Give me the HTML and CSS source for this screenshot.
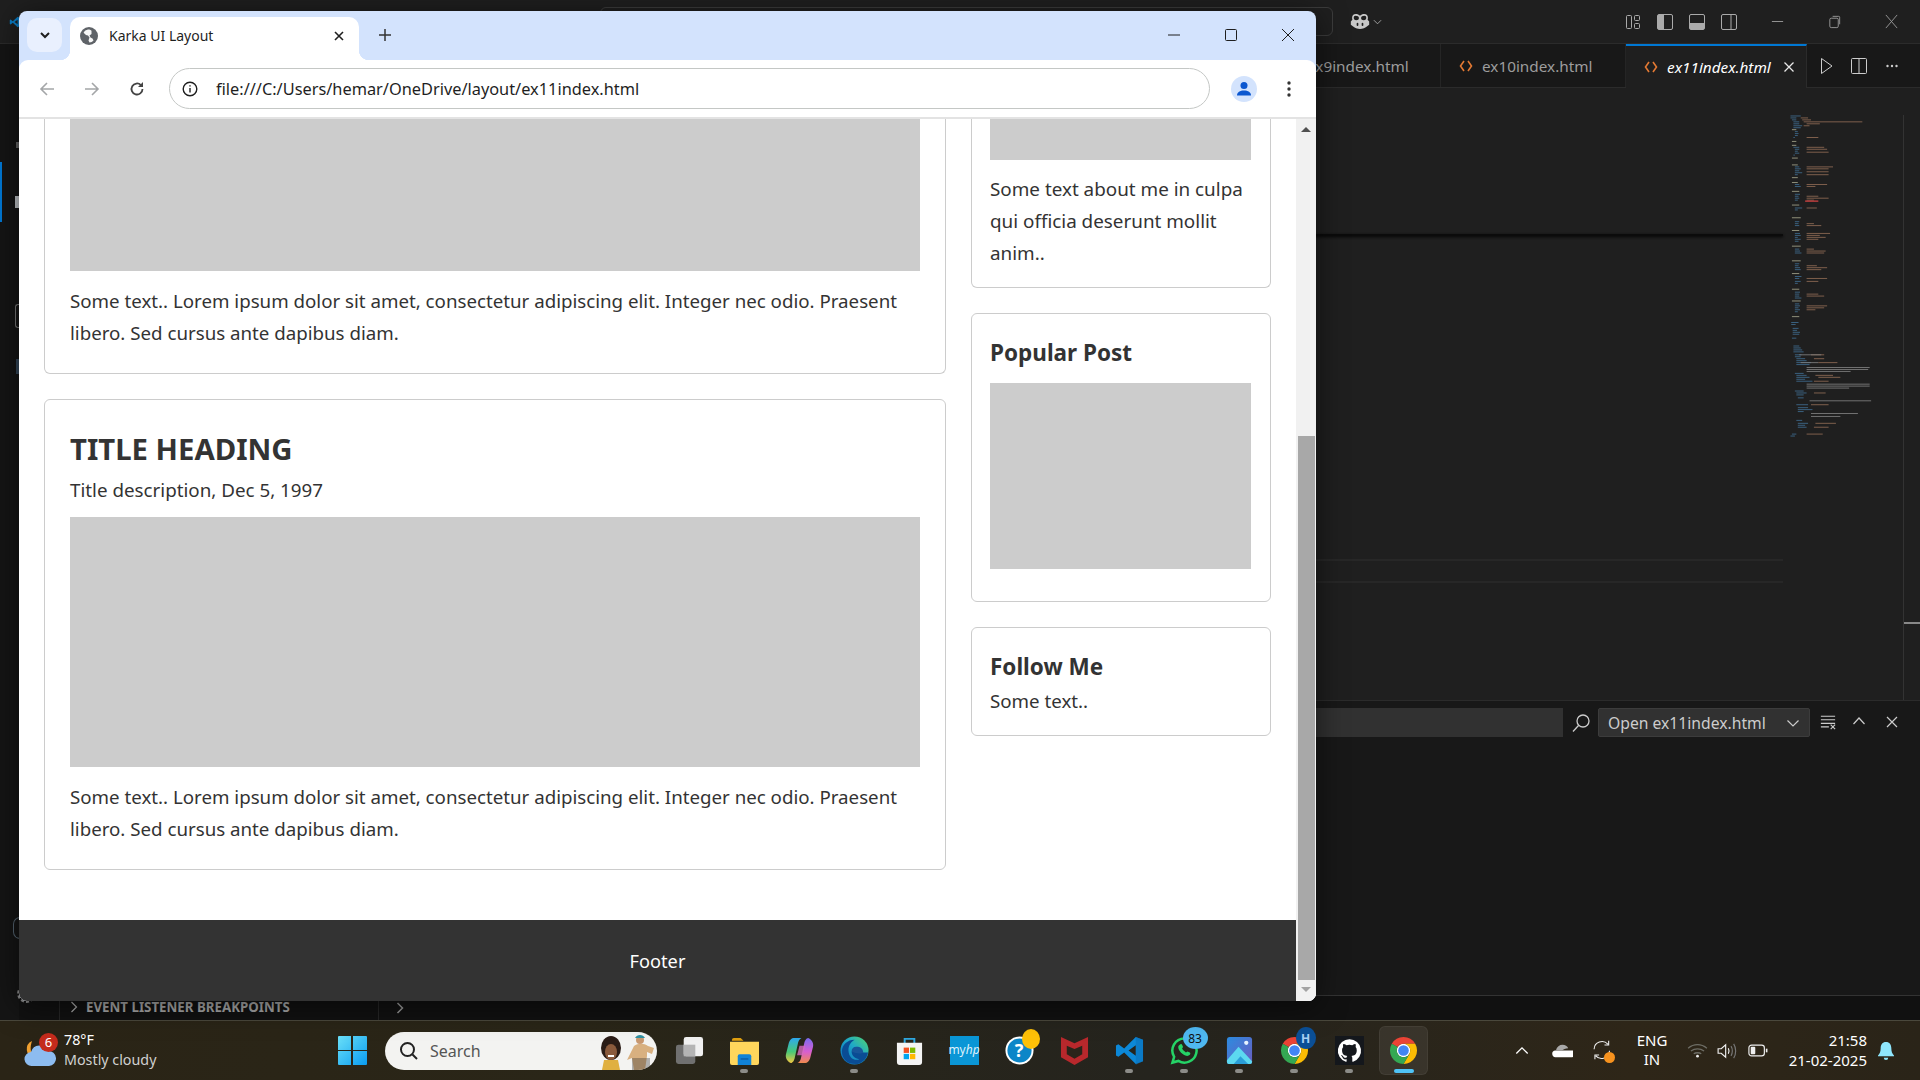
FILE: index.html
```html
<!DOCTYPE html>
<html lang="en">
<head>
    <meta charset="UTF-8">
    <meta name="viewport" content="width=device-width, initial-scale=1.0">
    <title>Karka UI Layout</title>
    <link rel="stylesheet" href="styles.css">
</head>

<body>

<div class="desktop">

    <!-- VS CODE BEHIND THE BROWSER -->
    <div class="code-app">
        <div class="code-titlebar">
            <svg class="code-logo" viewBox="0 0 30 30"><path fill="#0a7cc4" d="M21.5 2 9.5 13 4 8.8 2 9.8v10.4l2 1L9.5 17l12 11 6.5-3V5zm0 7.500L14 15l7.500 5.500z" fill-rule="evenodd"/></svg>
            <div class="command-center"></div>
            <svg class="copilot" viewBox="0 0 24 20"><path fill="#c8c8c8" fill-rule="evenodd" d="M7 1c2 0 3.500.6 5 2 1.500-1.400 3-2 5-2 3 0 4.500 1.800 4.500 4.500 0 1-.1 1.800-.4 2.500l1.900 2v4l-2 1.500C18.500 18 15 19 12 19s-6.500-1-9-3.500L1 14v-4l1.900-2c-.3-.7-.4-1.500-.4-2.500C2.500 2.800 4 1 7 1zm-.3 2.200c-1.600 0-2.200.9-2.200 2.300 0 2 .8 3 3 3 1.900 0 3.200-.8 3.200-2.600 0-1.700-1.700-2.700-4-2.700zm10.600 0c-2.300 0-4 1-4 2.700 0 1.800 1.300 2.600 3.200 2.600 2.200 0 3-1 3-3 0-1.400-.6-2.300-2.200-2.300zM9 11.500c-.6 0-1 .4-1 1v2c0 .6.400 1 1 1s1-.4 1-1v-2c0-.6-.4-1-1-1zm6 0c-.6 0-1 .4-1 1v2c0 .6.400 1 1 1s1-.4 1-1v-2c0-.6-.4-1-1-1z"/></svg>
            <svg class="copilot-caret" viewBox="0 0 10 6"><path d="M1 1l4 4 4-4" fill="none" stroke="#aaa"/></svg>

            <div class="layout-icons">
                <svg viewBox="0 0 18 18" fill="none" stroke="#aaa"><rect x="2.500" y="2.500" width="5" height="13" rx="1"/><rect x="10.500" y="2.500" width="5" height="5" rx="1"/><rect x="10.500" y="10.500" width="5" height="5" rx="1"/></svg>
                <svg viewBox="0 0 18 18" fill="none" stroke="#aaa"><rect x="1.500" y="1.500" width="15" height="15" rx="1.500"/><rect x="2" y="2" width="6" height="14" fill="#aaa" stroke="none"/></svg>
                <svg viewBox="0 0 18 18" fill="none" stroke="#aaa"><rect x="1.500" y="1.500" width="15" height="15" rx="1.500"/><rect x="2" y="10" width="14" height="6" fill="#aaa" stroke="none"/></svg>
                <svg viewBox="0 0 18 18" fill="none" stroke="#aaa"><rect x="1.500" y="1.500" width="15" height="15" rx="1.500"/><path d="M11 2v14"/></svg>
            </div>
            <div class="code-controls">
                <svg viewBox="0 0 16 16" fill="none" stroke="#999"><path d="M2 8h12"/></svg>
                <svg viewBox="0 0 16 16" fill="none" stroke="#999"><rect x="3" y="4.500" width="9" height="10" rx="1.500"/><path d="M6 2.500h6.500a1 1 0 0 1 1 1V11"/></svg>
                <svg viewBox="0 0 16 16" fill="none" stroke="#999"><path d="M2 1l12 14M14 1 2 15"/></svg>
            </div>
        </div>

        <div class="code-main">
            <div class="activity">
                <span class="activity-tick"></span>
                <span class="activity-marker"></span>
                <span class="activity-cog"></span>
                <span class="activity-box"></span>
                <span class="activity-tag"></span>
                <span class="activity-account"></span>
                <svg class="activity-gear" viewBox="0 0 24 24" fill="none" stroke="#8a8a8a" stroke-width="2"><circle cx="12" cy="12" r="8" stroke-dasharray="3 2"/><circle cx="12" cy="12" r="4"/></svg>
            </div>

            <div class="code-right">
                <div class="code-tabs">
                    <div class="code-tab">
                        <svg class="tab-code-icon" viewBox="0 0 14 14" fill="none" stroke="#e37933" stroke-width="1.600"><path d="M5 2 1.500 7 5 12M9 2l3.500 5L9 12"/></svg>ex9index.html
                    </div>
                    <div class="code-tab ten">
                        <svg class="tab-code-icon" viewBox="0 0 14 14" fill="none" stroke="#e37933" stroke-width="1.600"><path d="M5 2 1.500 7 5 12M9 2l3.500 5L9 12"/></svg>ex10index.html
                    </div>
                    <div class="code-tab active">
                        <svg class="tab-code-icon" viewBox="0 0 14 14" fill="none" stroke="#e37933" stroke-width="1.600"><path d="M5 2 1.500 7 5 12M9 2l3.500 5L9 12"/></svg><em>ex11index.html</em>
                        <svg class="tab-x" viewBox="0 0 12 12" fill="none" stroke="#e8e8e8" stroke-width="1.300"><path d="M1.500 1.500l9 9M10.500 1.500l-9 9"/></svg>
                    </div>
                    <div class="tab-actions">
                        <svg viewBox="0 0 18 18" fill="none" stroke="#ccc"><path d="M4.500 1.500v15L15 9z"/></svg>
                        <svg viewBox="0 0 18 18" fill="none" stroke="#ccc"><rect x="1.500" y="1.500" width="15" height="15" rx="1"/><path d="M9 1.500v15"/></svg>
                        <svg viewBox="0 0 18 18" fill="#ccc"><circle cx="4.500" cy="9" r="1.200"/><circle cx="9" cy="9" r="1.200"/><circle cx="13.500" cy="9" r="1.200"/></svg>
                    </div>
                </div>

                <div class="editor">
                    <div class="editor-lines">
                        <div class="sticky-shadow"></div>
                        <div class="fold-line first"></div>
                        <div class="fold-line"></div>
                    </div>
                    <div class="minimap">
                        <svg viewBox="0 0 120 330" width="88" height="323" preserveAspectRatio="none" fill="none" stroke-width="1">
                            <path stroke="#3f6c8f" d="M2 1h14M2 3h8M4 5h6M6 7h8M6 9h8M6 11h12M6 13h10M8 17h4M8 19h5M8 21h4M6 23h2M6 33h8M8 35h6M8 37h4M8 39h6M6 41h2M8 53h6M8 55h8M8 57h6M8 59h10M8 61h4M8 71h6M8 73h8M8 81h7M8 83h5M8 85h6M8 87h4M8 95h10M8 97h4M8 109h6M8 111h5M8 113h6M8 121h7M8 123h8M8 125h4M8 127h8M8 129h5M8 137h6M8 139h7M8 141h9M8 152h6M8 154h5M8 156h7M8 158h8M8 165h9M8 167h6M8 170h8M8 172h4M8 181h7M8 183h6M8 185h6M8 187h9M8 193h6M8 195h7M8 197h5M8 199h7M8 201h4M3 212h10M3 214h6M5 218h8M5 220h6M5 222h10M5 224h9M4 228h6M6 236h8M6 238h10M6 240h12M6 242h14M8 245h9M8 247h8M10 249h12M10 251h14M10 253h20M10 255h18M8 264h12M10 266h14M10 268h18M10 270h12M10 272h22M8 282h12M10 284h14M10 286h10M12 289h8M10 296h16M12 299h14M12 301h20M12 303h8M10 312h8M12 315h14M12 317h10M12 319h12M4 326h6M2 328h6"/>
                            <path stroke="#8f6a54" d="M16 3h10M18 5h12M20 7h80M24 9h18M20 11h8M24 23h16M24 33h24M24 35h28M24 38h30M24 53h36M24 55h30M24 58h30M24 61h30M24 71h28M24 73h12M24 83h16M24 85h30M24 87h10M24 95h14M24 111h10M24 113h20M24 121h32M24 123h18M24 125h26M24 127h16M24 137h10M24 139h26M24 141h24M24 154h14M24 156h28M24 158h20M24 167h28M24 170h16M24 183h16M24 185h24M24 195h28M24 197h24M24 199h12M30 245h18M34 249h14M40 253h26M36 266h24M40 268h30M34 272h20M34 284h16M30 296h24M36 315h28M34 319h20M24 326h22"/>
                            <path stroke="#a3a38a" d="M4 15h6M4 27h6M4 31h6M4 44h8M4 51h8M4 64h8M4 69h8M4 78h10M4 92h10M4 105h12M4 118h10M4 134h12M4 149h12M4 162h10M4 178h10M4 190h12M4 206h10"/>
                            <path stroke="#808080" d="M14 245h30M16 253h24M24 258h86M24 260h84M24 262h60M24 275h86M24 277h86M24 279h58M28 292h84M30 305h64M30 308h40"/>
                            <path stroke="#b93c3c" stroke-width="1.500" d="M22 88h18"/>
                        </svg>
                    </div>
                    <div class="editor-rail">
                        <span class="rail-mark"></span>
                    </div>
                </div>

                <div class="panel">
                    <div class="panel-input"></div>
                    <svg class="panel-search" viewBox="0 0 20 20" fill="none" stroke="#ccc" stroke-width="1.300"><circle cx="12" cy="8" r="6"/><path d="M7.500 12.500 2 18.500"/></svg>
                    <div class="panel-select">
                        <span>Open ex11index.html</span>
                        <svg viewBox="0 0 14 14" fill="none" stroke="#ccc" stroke-width="1.200"><path d="M1.500 4.500 7 10l5.500-5.500"/></svg>
                    </div>
                    <svg class="panel-clear" viewBox="0 0 20 18" fill="none" stroke="#ccc" stroke-width="1.300"><path d="M2 2.500h16M2 6.500h16M2 10.500h16M2 14.500h9M13 12l5 5M18 12l-5 5"/></svg>
                    <svg class="panel-up" viewBox="0 0 14 14" fill="none" stroke="#ccc" stroke-width="1.200"><path d="M1.500 10 7 4l5.500 6"/></svg>
                    <svg class="panel-x" viewBox="0 0 14 14" fill="none" stroke="#ccc" stroke-width="1.200"><path d="M2 2l10 10M12 2 2 12"/></svg>
                </div>

                <div class="debug-row">
                    <div class="debug-section">
                        <svg viewBox="0 0 8 14" fill="none" stroke="#aaa" stroke-width="1.200"><path d="M1.500 2 6.500 7l-5 5"/></svg>
                        <span>EVENT LISTENER BREAKPOINTS</span>
                    </div>
                    <svg class="debug-arrow" viewBox="0 0 8 14" fill="none" stroke="#999" stroke-width="1.500"><path d="M1.500 2 6.500 7l-5 5"/></svg>
                </div>
            </div>
        </div>
    </div>

    <!-- BROWSER WINDOW -->
    <div class="browser">
        <div class="tabstrip">
            <button class="tab-search">
                <svg viewBox="0 0 12 12" fill="none" stroke="#1f1f1f" stroke-width="2"><path d="M2 4l4 4 4-4"/></svg>
            </button>
            <div class="tab">
                <svg class="favicon" viewBox="0 0 18 18"><circle cx="9" cy="9" r="9" fill="#5f6368"/><path fill="#fff" d="M8 2.500c-2 .4-3.500 1.500-4.400 3.200L6 8l2 .5 1.500 2-1 3 1 2c1.500 0 3-.8 4-2l-1-2-2-1-1-2 2-1.500V3.800c-.8-.8-2-1.300-3.500-1.300z" opacity=".95"/></svg>
                <span class="tab-title">Karka UI Layout</span>
                <svg class="tab-close" viewBox="0 0 12 12" fill="none" stroke="#1f1f1f" stroke-width="1.600"><path d="M2 2l8 8M10 2l-8 8"/></svg>
            </div>
            <svg class="new-tab" viewBox="0 0 14 14" fill="none" stroke="#333" stroke-width="1.500"><path d="M7 1v12M1 7h12"/></svg>
            <div class="browser-controls">
                <svg viewBox="0 0 14 14" fill="none" stroke="#1f1f1f"><path d="M1 7h12"/></svg>
                <svg viewBox="0 0 14 14" fill="none" stroke="#1f1f1f"><rect x="1.500" y="1.500" width="11" height="11" rx="1"/></svg>
                <svg viewBox="0 0 14 14" fill="none" stroke="#1f1f1f"><path d="M1 1l12 12M13 1 1 13"/></svg>
            </div>
        </div>

        <div class="toolbar">
            <svg class="nav-icon" viewBox="0 0 18 18" fill="none" stroke="#a4a6a8" stroke-width="1.600"><path d="M16 9H3M9 3 3 9l6 6"/></svg>
            <svg class="nav-icon" viewBox="0 0 18 18" fill="none" stroke="#a4a6a8" stroke-width="1.600"><path d="M2 9h13M9 3l6 6-6 6"/></svg>
            <svg class="nav-icon" viewBox="0 0 18 18" fill="none" stroke="#444" stroke-width="1.800"><path d="M14.500 9a5.500 5.500 0 1 1-1.600-3.900"/><path fill="#444" stroke="none" d="M15 2v5h-5z"/></svg>
            <div class="omnibox">
                <svg class="info" viewBox="0 0 16 16" fill="none" stroke="#1f1f1f" stroke-width="1.400"><circle cx="8" cy="8" r="6.800"/><path d="M8 7v4.500M8 4.200v1.400"/></svg>
                <span class="url">file:///C:/Users/hemar/OneDrive/layout/ex11index.html</span>
            </div>
            <svg class="profile" viewBox="0 0 26 26"><circle cx="13" cy="13" r="13" fill="#d3e3fd"/><circle cx="13" cy="9.500" r="3.500" fill="#0b57d0"/><path fill="#0b57d0" d="M6 19.500c0-3.500 3-5 7-5s7 1.500 7 5z"/></svg>
            <svg class="kebab" viewBox="0 0 4 18" fill="#333"><circle cx="2" cy="3" r="1.700"/><circle cx="2" cy="9" r="1.700"/><circle cx="2" cy="15" r="1.700"/></svg>
        </div>

        <div class="sheet">
            <div class="page">
                <div class="page-row">
                    <div class="main-col">
                        <div class="card clipped">
                            <div class="fake-img img-cut"></div>
                            <p>Some text.. Lorem ipsum dolor sit amet, consectetur adipiscing elit. Integer nec odio. Praesent libero. Sed cursus ante dapibus diam.</p>
                        </div>
                        <div class="card">
                            <h2>TITLE HEADING</h2>
                            <h5>Title description, Dec 5, 1997</h5>
                            <div class="fake-img img-big"></div>
                            <p>Some text.. Lorem ipsum dolor sit amet, consectetur adipiscing elit. Integer nec odio. Praesent libero. Sed cursus ante dapibus diam.</p>
                        </div>
                    </div>
                    <div class="side-col">
                        <div class="card clipped side about">
                            <div class="fake-img img-side-cut"></div>
                            <p>Some text about me in culpa qui officia deserunt mollit anim..</p>
                        </div>
                        <div class="card side popular">
                            <h3>Popular Post</h3>
                            <div class="fake-img img-popular"></div>
                        </div>
                        <div class="card side follow">
                            <h3>Follow Me</h3>
                            <p>Some text..</p>
                        </div>
                    </div>
                </div>
                <div class="footer">Footer</div>
            </div>
            <div class="scrollbar">
                <div class="scroll-btn"><span class="arrow-up"></span></div>
                <div class="scroll-thumb"></div>
                <div class="scroll-btn down"><span class="arrow-down"></span></div>
            </div>
        </div>
    </div>
</div>

<!-- WINDOWS TASKBAR -->
<div class="taskbar">
    <div class="weather">
        <div class="weather-icon">
            <svg viewBox="0 0 32 36">
                <path fill="#f0a030" d="M10 4a9 9 0 0 0 2 17c-4-6-4-11-2-17z" transform="translate(-2 4)"/>
                <path fill="#8dbcf0" d="M8 33a7 7 0 0 1-1-14 9 9 0 0 1 17-1 7.500 7.500 0 0 1 1 15z"/>
            </svg>
            <span class="weather-badge">6</span>
        </div>
        <div class="weather-text">
            <div>78°F</div>
            <div class="dim">Mostly cloudy</div>
        </div>
    </div>

    <svg class="start" viewBox="0 0 29 29">
        <defs><linearGradient id="win" x1="0" y1="0" x2="1" y2="1"><stop offset="0" stop-color="#6be0f8"/><stop offset="1" stop-color="#0a9cf0"/></linearGradient></defs>
        <path fill="url(#win)" d="M1 0h12v14H0V1a1 1 0 0 1 1-1zM15 0h13a1 1 0 0 1 1 1v13H15zM0 15h13v14H1a1 1 0 0 1-1-1zM15 15h14v13a1 1 0 0 1-1 1H15z"/>
    </svg>

    <div class="search">
        <svg class="search-glass" viewBox="0 0 20 20" fill="none" stroke="#222" stroke-width="2"><circle cx="8.500" cy="8.500" r="6.500"/><path d="M13.500 13.500 18 18"/></svg>
        <span>Search</span>
        <svg class="search-art" viewBox="0 0 60 38">
            <path fill="#e0b040" d="M8 28h14l2 10H6z"/>
            <ellipse cx="15" cy="16" rx="10" ry="12" fill="#2a1c16"/>
            <ellipse cx="15" cy="20" rx="6" ry="8" fill="#8a5a3c"/>
            <path fill="#fff" d="M12 23h6v2h-6z"/>
            <circle cx="44" cy="8" r="4" fill="#c89870"/>
            <path fill="#2f8fa0" d="M39 6c2-4 8-4 10 0z"/>
            <path fill="#d8b080" d="M38 14c4-3 10-3 14 0l6 2-2 6-5-2v4l-2 14H38l-2-12-5 2z"/>
            <path fill="#333" d="M36 26h18v12H36z" opacity=".35"/>
        </svg>
    </div>

    <div class="apps">
        <div class="app">
            <svg viewBox="0 0 30 30"><rect x="1" y="9" width="20" height="20" rx="2.500" fill="#707070"/><rect x="9" y="1" width="20" height="20" rx="2.500" fill="#f0f0f0"/><rect x="9" y="9" width="12" height="12" fill="#b4b4b4"/></svg>
        </div>
        <div class="app">
            <svg viewBox="0 0 30 30"><path fill="#e0a010" d="M2 4a2 2 0 0 1 2-2h7l3 3h-12z"/><path fill="#ffd65c" d="M0 6h30v22a2 2 0 0 1-2 2H2a2 2 0 0 1-2-2z"/><path fill="#1083d8" d="M8 21a2 2 0 0 1 2-2h10a2 2 0 0 1 2 2v9H8z"/><path fill="#0b5da8" d="M11 23h8v1.500h-8z"/></svg>
            <span class="app-dot"></span>
        </div>
        <div class="app">
            <svg viewBox="0 0 30 30">
                <defs>
                    <linearGradient id="copL" x1="0" y1="0" x2="0" y2="1"><stop offset="0" stop-color="#2ea8f0"/><stop offset=".55" stop-color="#48c878"/><stop offset="1" stop-color="#f4c840"/></linearGradient>
                    <linearGradient id="copR" x1="0" y1="0" x2="0" y2="1"><stop offset="0" stop-color="#7a6cf0"/><stop offset=".55" stop-color="#d85ed0"/><stop offset="1" stop-color="#f08a4c"/></linearGradient>
                </defs>
                <path fill="url(#copR)" d="M21 28h-8c2-1 3-3 3.500-5L20 7c.5-2 2-5 4-5 3 1 6 5 5 9l-3 12c-1 3-3 5-5 5z"/>
                <path fill="url(#copL)" d="M9 2h8c-2 1-3 3-3.500 5L10 23c-.5 2-2 5-4 5-3-1-6-5-5-9L4 7c1-3 3-5 5-5z"/>
                <path fill="#d86ac0" d="M15 10h6l-2.500 10h-6z" opacity=".8"/>
            </svg>
        </div>
        <div class="app">
            <svg viewBox="0 0 30 30">
                <defs><linearGradient id="edge" x1="1" y1="0" x2="0" y2="1"><stop offset="0" stop-color="#54d66b"/><stop offset=".45" stop-color="#1ea8c8"/><stop offset="1" stop-color="#0a63b8"/></linearGradient></defs>
                <circle cx="15" cy="15" r="14.500" fill="url(#edge)"/>
                <path fill="#0a4c94" d="M29 17c-1 7-7 12-13 12-8 0-14-5-14-13C2 9 8 4 15 4c-5 3-7 8-6 13 1 6 6 9 11 7-5-1-8-4-8-8 0-3 2-5 5-5 4 0 7 2 7 6z"/>
                <path fill="#fff" opacity=".06" d="M12 16c0-3 2-5 5-5 4 0 7 2 7 6-2 2-8 1-12-1z"/>
            </svg>
            <span class="app-dot"></span>
        </div>
        <div class="app">
            <svg viewBox="0 0 30 30"><path fill="none" stroke="#2fa8e0" stroke-width="2" d="M10 9V3h10v6"/><path fill="#f4f4f4" d="M2 7h26v20a3 3 0 0 1-3 3H5a3 3 0 0 1-3-3z"/><path fill="#f25022" d="M9 12h5.500v5.500H9z"/><path fill="#7fba00" d="M15.500 12H21v5.500h-5.500z"/><path fill="#00a4ef" d="M9 18.500h5.500V24H9z"/><path fill="#ffb900" d="M15.500 18.500H21V24h-5.500z"/></svg>
        </div>
        <div class="app">
            <svg viewBox="0 0 30 30"><rect width="30" height="30" fill="#0a96d6"/></svg>
            <span class="myhp-label">my<i>hp</i></span>
        </div>
        <div class="app">
            <svg viewBox="0 0 30 30"><circle cx="15" cy="15" r="14.500" fill="#fff"/><circle cx="15" cy="15" r="12.500" fill="#0c86c8"/></svg>
            <span class="help-mark">?</span>
            <span class="help-badge"></span>
        </div>
        <div class="app">
            <svg viewBox="0 0 30 30"><path fill="#b8282c" d="M1 1l14 6.500L29 1v21L15 30 1 22z"/><path fill="#2a241a" d="M7 10l8 3.500 8-3.500v9l-8 4.500L7 19z"/></svg>
        </div>
        <div class="app">
            <svg viewBox="0 0 30 30"><path fill="#0c88d8" fill-rule="evenodd" d="M21.500 1 9.500 13 3.500 8.500 1 9.800v10.400l2.500 1.300 6-4.500 12 12L29 26V4zm0 8.500L14 15l7.500 5.500z"/><path fill="#0a6cb4" d="M21.500 1 29 4v22l-7.500 3.800z" opacity=".5"/></svg>
            <span class="app-dot"></span>
        </div>
        <div class="app">
            <svg viewBox="0 0 30 30" fill="none"><path stroke="#25d366" stroke-width="2.600" d="M15 2.500a12.500 12.500 0 0 0-10.700 19L2.500 27.500l6.200-1.700A12.500 12.500 0 1 0 15 2.500z"/><path fill="#25d366" d="M10 9c1-1 2-1 2.500 0l1 2.500-1 1.500c1 2 2.500 3 4 4l1.500-1 2.500 1c.7.500.7 1.500 0 2.500-1.500 1.500-4 1.500-7-.5-3-2-5-5-5-7.500 0-1 .7-1.800 1.500-2.500z"/></svg>
            <span class="app-dot"></span>
            <span class="wa-badge">83</span>
        </div>
        <div class="app">
            <svg viewBox="0 0 30 30">
                <defs><linearGradient id="pho" x1="0" y1="0" x2="1" y2="1"><stop offset="0" stop-color="#2c8ce0"/><stop offset="1" stop-color="#6a5cc0"/></linearGradient></defs>
                <rect x="2" y="1" width="26" height="28" rx="3" fill="url(#pho)"/>
                <circle cx="22" cy="7" r="2.200" fill="#e8f4ff"/>
                <path fill="#5cd8f0" d="M2 25 14 11l14 15v1a2 2 0 0 1-2 2H4a2 2 0 0 1-2-2z"/>
                <path fill="#2a9ed8" d="M9 29l7-8 8 8z"/>
            </svg>
            <span class="app-dot"></span>
        </div>
        <div class="app">
            <svg viewBox="0 0 30 30"><use href="#chrome-logo"/></svg>
            <span class="app-dot"></span>
            <span class="h-badge">H</span>
        </div>
        <div class="app">
            <svg viewBox="0 0 30 30"><rect width="30" height="30" fill="#14171c"/><g transform="translate(3 3)"><path fill="#fff" d="M12 .3a12 12 0 0 0-3.800 23.400c.6.1.8-.3.8-.6v-2c-3.300.7-4-1.600-4-1.600-.6-1.400-1.400-1.800-1.400-1.800-1-.7.100-.7.100-.7 1.200.1 1.800 1.200 1.800 1.200 1 1.800 2.800 1.300 3.500 1 .1-.8.4-1.300.8-1.600-2.700-.3-5.500-1.300-5.500-5.900 0-1.300.5-2.400 1.200-3.200-.1-.3-.5-1.500.1-3.200 0 0 1-.3 3.300 1.200a11.500 11.500 0 0 1 6 0c2.300-1.500 3.300-1.200 3.300-1.200.6 1.700.2 2.900.1 3.200.8.8 1.200 1.900 1.200 3.200 0 4.600-2.800 5.600-5.500 5.900.5.4.9 1.100.9 2.200v3.300c0 .3.2.7.8.6A12 12 0 0 0 12 .3z"/></g></svg>
            <span class="app-dot"></span>
        </div>
        <div class="app current">
            <svg viewBox="0 0 30 30">
                <g id="chrome-logo">
                    <circle cx="15" cy="15" r="7" fill="#fff"/>
                    <circle cx="15" cy="15" r="5.500" fill="#4285f4"/>
                    <path fill="#ea4335" d="M15 1a14 14 0 0 1 12.120 7H15a7 7 0 0 0-6.060 3.500L2.880 8A14 14 0 0 1 15 1z"/>
                    <path fill="#fbbc04" d="M27.120 8A14 14 0 0 1 15 29l6.060-10.500A7 7 0 0 0 15 8z"/>
                    <path fill="#34a853" d="M2.880 8A14 14 0 0 0 15 29l6.060-10.500a7 7 0 0 1-12.120-7z"/>
                </g>
            </svg>
            <span class="app-dot wide"></span>
        </div>
    </div>

    <div class="tray">
        <svg class="tray-chevron" viewBox="0 0 16 10" fill="none" stroke="#fff" stroke-width="1.500"><path d="M1.500 8.500 8 2l6.500 6.500"/></svg>
        <svg class="tray-cloud" viewBox="0 0 22 14"><path fill="#fff" d="M4 13.500a3.500 3.500 0 0 1-.5-7h17a3.500 3.500 0 0 1 .5 7z"/><path fill="#a8a8a8" d="M4 6.500C5 2.500 8 .5 11 .5c3 0 5 1.500 6 3.500-3 0-5 1-6.500 2.500z"/></svg>
        <div class="tray-sync">
            <svg viewBox="0 0 24 24" fill="none" stroke="#eee" stroke-width="1.300"><path d="M2.500 11A9.500 9.500 0 0 1 19 5M20 1v5h-5M21 13a9.500 9.500 0 0 1-16.500 6M3.500 23v-5h5"/></svg>
            <span class="sync-dot"></span>
        </div>
        <div class="tray-lang">
            <div>ENG</div>
            <div>IN</div>
        </div>
        <svg class="tray-wifi" viewBox="0 0 22 16" fill="none" stroke="#6e6e66" stroke-width="1.400"><path d="M1 5.500c6-5 14-5 20 0M4 8.500c4-3 10-3 14 0M7 11.500c2-1.500 6-1.500 8 0"/><circle cx="11" cy="14" r="1.500" fill="#eee" stroke="none"/></svg>
        <svg class="tray-sound" viewBox="0 0 22 18" fill="none" stroke="#eee" stroke-width="1.300"><path d="M1 6.500h3.500L9.500 2v14l-5-4.500H1z"/><path d="M12.500 6c1 2 1 4 0 6"/><path d="M15.500 3.500c2 3 2 8 0 11M18.500 1c3 4.500 3 11.500 0 16" stroke="#777"/></svg>
        <svg class="tray-battery" viewBox="0 0 22 14" fill="none" stroke="#eee" stroke-width="1.300"><rect x="1" y="1" width="17" height="12" rx="3"/><rect x="3" y="3" width="5" height="8" rx="1" fill="#eee" stroke="none"/><path d="M20.500 5v4" stroke-width="1.800"/></svg>
        <div class="tray-clock">
            <div>21:58</div>
            <div>21-02-2025</div>
        </div>
        <svg class="tray-bell" viewBox="0 0 18 22"><path fill="#8fe6fc" d="M9 1c4 0 6 3 6 7 0 4 1 6 3 8v1H0v-1c2-2 3-4 3-8 0-4 2-7 6-7z"/><path fill="#8fe6fc" d="M6.500 18.500h5a2.500 2.500 0 0 1-5 0z"/></svg>
    </div>
</div>

</body>
</html>
```

FILE: styles.css
```css
/* ===== Page ===== */
html, body {
    margin: 0;
    height: 100%;
}

body {
    width: 1920px;
    height: 1080px;
    display: flex;
    flex-direction: column;
    overflow: hidden;
    background: #1f1f1f;
    font-family: "Noto Sans", "Open Sans", sans-serif;
}

svg {
    display: block;
    flex: none;
}

.desktop {
    position: relative;
    height: 1020px;
}

/* ===== VS Code ===== */
.code-app {
    height: 100%;
    display: flex;
    flex-direction: column;
}

.code-titlebar {
    height: 43px;
    flex: none;
    display: flex;
    align-items: center;
    border-bottom: 1px solid #2b2b2b;
    box-sizing: content-box;
}

.code-logo {
    width: 12px;
    height: 12px;
    margin-left: 9px;
}

.command-center {
    width: 733px;
    height: 29px;
    margin-left: 579px;
    border: 1px solid #3c3c3c;
    border-radius: 6px;
    box-sizing: border-box;
}

.copilot {
    width: 20px;
    height: 17px;
    margin-left: 17px;
}

.copilot-caret {
    width: 9px;
    height: 6px;
    margin-left: 3px;
}

.layout-icons {
    display: flex;
    gap: 14px;
    margin-left: 242px;
}

.layout-icons svg {
    width: 18px;
    height: 18px;
}

.code-controls {
    display: flex;
    gap: 42px;
    margin-left: 32px;
}

.code-controls svg {
    width: 15px;
    height: 15px;
}

.code-main {
    flex: 1;
    display: flex;
    min-height: 0;
}

.activity {
    width: 19px;
    flex: none;
    position: relative;
    z-index: 1;
    background: #151515;
    display: flex;
    flex-direction: column;
}

.activity-tick {
    width: 3px;
    height: 6px;
    margin: 98px 0 0 16px;
    background: #666;
}

.activity-marker {
    width: 2px;
    height: 60px;
    margin-top: 14px;
    background: #0078d4;
}

.activity-cog {
    width: 4px;
    height: 12px;
    margin: -26px 0 0 15px;
    background: #c0c4c8;
}

.activity-box {
    width: 3px;
    height: 22px;
    margin: 96px 0 0 15px;
    border: 1px solid #777;
    border-right: none;
    border-radius: 3px 0 0 3px;
    box-sizing: content-box;
}

.activity-tag {
    width: 3px;
    height: 15px;
    margin: 31px 0 0 16px;
    background: #34475a;
}

.activity-account {
    width: 6px;
    height: 20px;
    margin: 543px 0 0 13px;
    border: 1px solid #54636f;
    border-right: none;
    border-radius: 10px 0 0 10px;
}

.activity-gear {
    width: 25px;
    height: 25px;
    margin: 42px 0 0 14px;
}

.code-right {
    flex: 1;
    min-width: 0;
    display: flex;
    flex-direction: column;
}

.code-tabs {
    height: 44px;
    flex: none;
    display: flex;
    box-sizing: border-box;
    padding-left: 1247px;
    background: #181818;
    border-bottom: 1px solid #2b2b2b;
    font-size: 15.300px;
    color: #9d9d9d;
}

.code-tab {
    width: 175px;
    display: flex;
    align-items: center;
    box-sizing: border-box;
    padding-left: 18px;
    border-right: 1px solid #252525;
    white-space: nowrap;
}

.code-tab.ten {
    width: 185px;
}

.code-tab.active {
    width: 181px;
    height: 44px;
    color: #fff;
    background: #1f1f1f;
    border-top: 2px solid #0078d4;
    border-right: 1px solid #2b2b2b;
}

.tab-code-icon {
    width: 14px;
    height: 14px;
    margin-right: 9px;
}

.tab-x {
    width: 12px;
    height: 12px;
    margin-left: auto;
    margin-right: 11px;
}

.tab-actions {
    display: flex;
    align-items: center;
    gap: 15px;
    margin-left: 10px;
}

.tab-actions svg {
    width: 18px;
    height: 18px;
}

.editor {
    flex: 1;
    min-height: 0;
    display: flex;
    background: #1f1f1f;
}

.editor-lines {
    width: 1764px;
    flex: none;
}

.sticky-shadow {
    height: 2px;
    margin-top: 146px;
    background: #0b0b0b;
    box-shadow: 0 1px 3px #000;
}

.fold-line {
    height: 2px;
    margin-top: 20px;
    background: #272727;
}

.fold-line.first {
    margin-top: 323px;
}

.minimap {
    width: 120px;
    flex: none;
    box-sizing: border-box;
    padding: 27px 0 0 6px;
}

.editor-rail {
    flex: 1;
    margin-top: 27px;
    border-left: 1px solid #333;
}

.rail-mark {
    display: block;
    height: 2px;
    margin-top: 507px;
    background: #888;
}

.panel {
    height: 295px;
    flex: none;
    box-sizing: border-box;
    display: flex;
    align-items: flex-start;
    padding-top: 7px;
    background: #181818;
    border-top: 1px solid #2b2b2b;
}

.panel-input {
    width: 263px;
    height: 29px;
    margin-left: 1281px;
    background: #313131;
}

.panel-search {
    width: 20px;
    height: 20px;
    margin: 5px 7px 0 8px;
}

.panel-select {
    width: 212px;
    height: 29px;
    display: flex;
    align-items: center;
    justify-content: space-between;
    box-sizing: border-box;
    padding: 0 9px;
    background: #313131;
    border: 1px solid #3c3c3c;
    border-radius: 2px;
    font-size: 15.700px;
    color: #ccc;
    white-space: nowrap;
}

.panel-select svg {
    width: 14px;
    height: 14px;
}

.panel-clear {
    width: 18px;
    height: 16px;
    margin: 6px 0 0 9px;
}

.panel-up {
    width: 14px;
    height: 14px;
    margin: 6px 0 0 15px;
}

.panel-x {
    width: 14px;
    height: 14px;
    margin: 7px 0 0 19px;
}

.debug-row {
    height: 25px;
    flex: none;
    display: flex;
    align-items: center;
    padding-left: 40px;
    background: #111;
    border-top: 1px solid #333;
    box-sizing: border-box;
}

.debug-section {
    width: 320px;
    height: 100%;
    display: flex;
    align-items: center;
    gap: 8px;
    box-sizing: border-box;
    padding: 0 0 2px 10px;
    border-left: 1px solid #262626;
    border-right: 1px solid #262626;
    font-size: 13.300px;
    font-weight: 700;
    color: #a8a8a8;
    white-space: nowrap;
}

.debug-section svg {
    width: 8px;
    height: 14px;
}

.debug-arrow {
    width: 8px;
    height: 14px;
    margin-left: 17px;
}

/* ===== Browser window ===== */
.browser {
    position: absolute;
    z-index: 2;
    left: 19px;
    top: 11px;
    width: 1297px;
    height: 990px;
    display: flex;
    flex-direction: column;
    overflow: hidden;
    border-radius: 8px;
    background: #d3e3fd;
    box-shadow: 0 4px 30px rgba(0, 0, 0, 0.55);
}

.tabstrip {
    height: 49px;
    flex: none;
    display: flex;
}

.tab-search {
    width: 35px;
    height: 34px;
    margin: 7px 0 0 8px;
    padding: 0;
    display: flex;
    align-items: center;
    justify-content: center;
    border: none;
    border-radius: 10px;
    background: #e9f0fe;
}

.tab-search svg {
    width: 12px;
    height: 12px;
}

.tab {
    position: relative;
    width: 289px;
    height: 43px;
    margin: 6px 0 0 8px;
    display: flex;
    align-items: center;
    box-sizing: border-box;
    padding: 0 14px 6px 10px;
    border-radius: 10px 10px 0 0;
    background: #fff;
}

.tab::before,
.tab::after {
    content: "";
    position: absolute;
    bottom: 0;
    width: 10px;
    height: 10px;
}

.tab::before {
    left: -10px;
    background: radial-gradient(circle at 0 0, #d3e3fd 10px, #fff 10.500px);
}

.tab::after {
    right: -10px;
    background: radial-gradient(circle at 100% 0, #d3e3fd 10px, #fff 10.500px);
}

.favicon {
    width: 18px;
    height: 18px;
}

.tab-title {
    margin-left: 11px;
    font-size: 14px;
    color: #1f1f1f;
    white-space: nowrap;
}

.tab-close {
    width: 12px;
    height: 12px;
    margin-left: auto;
}

.new-tab {
    width: 14px;
    height: 14px;
    margin: 17px 0 0 19px;
}

.browser-controls {
    display: flex;
    gap: 43px;
    margin: 17px 0 0 auto;
    padding-right: 21px;
}

.browser-controls svg {
    width: 14px;
    height: 14px;
}

.toolbar {
    height: 59px;
    flex: none;
    display: flex;
    align-items: center;
    box-sizing: border-box;
    padding: 0 0 0 19px;
    border-radius: 9px 9px 0 0;
    background: #fff;
    border-bottom: 2px solid #e3e3e3;
}

.nav-icon {
    width: 18px;
    height: 18px;
    margin-right: 27px;
}

.nav-icon:nth-child(3) {
    margin-right: 23px;
}

.omnibox {
    width: 1041px;
    height: 41px;
    display: flex;
    align-items: center;
    box-sizing: border-box;
    padding-left: 12px;
    border: 1px solid #c4c7c5;
    border-radius: 21px;
}

.info {
    width: 16px;
    height: 16px;
}

.url {
    margin-left: 18px;
    font-size: 16.350px;
    color: #1f1f1f;
    white-space: nowrap;
}

.profile {
    width: 26px;
    height: 26px;
    margin-left: 21px;
}

.kebab {
    width: 4px;
    height: 18px;
    margin-left: 30px;
}

/* ===== Page inside the browser ===== */
.sheet {
    flex: 1;
    min-height: 0;
    display: flex;
    background: #fff;
    color: #333;
}

.page {
    width: 1277px;
    display: flex;
    flex-direction: column;
}

.page-row {
    flex: 1;
    display: flex;
    gap: 25px;
    padding: 0 25px;
}

.main-col {
    width: 902px;
    display: flex;
    flex-direction: column;
    gap: 25px;
}

.side-col {
    width: 300px;
    display: flex;
    flex-direction: column;
    gap: 25px;
}

.card {
    box-sizing: border-box;
    padding: 25px 25px 24px;
    border: 1px solid #ccc;
    border-radius: 6px;
}

.card.clipped {
    padding-top: 0;
    border-top: none;
    border-radius: 0 0 6px 6px;
}

.card.side {
    padding-left: 18px;
    padding-right: 19px;
}

.card.about {
    padding-bottom: 18px;
}

.card.about p {
    margin-top: 13px;
    font-size: 18.850px;
}

.card p {
    margin: 14px 0 0;
    font-size: 18.720px;
    line-height: 32px;
}

.card h2 {
    margin: 0;
    font-size: 29.300px;
    line-height: 49px;
    font-weight: 700;
}

.card h3 {
    margin: 0;
    font-size: 22.500px;
    line-height: 32px;
    font-weight: 700;
}

.card h5 {
    margin: 0;
    font-size: 18.800px;
    line-height: 32px;
    font-weight: 400;
}

.fake-img {
    background: #ccc;
}

.card h5 + .fake-img {
    margin-top: 11px;
}

.img-cut {
    height: 152px;
}

.img-big {
    height: 250px;
}

.img-side-cut {
    height: 41px;
}

.card.popular {
    padding-top: 23px;
    height: 289px;
}

.img-popular {
    height: 186px;
    margin-top: 14px;
}

.card.follow {
    padding-top: 23px;
    height: 109px;
}

.card.follow p {
    margin: 2px 0 0;
}

.footer {
    height: 81px;
    flex: none;
    display: flex;
    align-items: center;
    justify-content: center;
    padding-top: 1px;
    box-sizing: border-box;
    background: #333;
    color: #fff;
    font-size: 18.200px;
}

.scrollbar {
    width: 20px;
    flex: none;
    display: flex;
    flex-direction: column;
    background: #f1f1f1;
}

.scroll-btn {
    height: 317px;
    flex: none;
    display: flex;
    justify-content: center;
    padding-top: 8px;
    box-sizing: border-box;
}

.scroll-btn.down {
    height: 21px;
    padding-top: 7px;
    background: #f1f1f1;
}

.arrow-up {
    width: 0;
    height: 0;
    border-left: 5px solid transparent;
    border-right: 5px solid transparent;
    border-bottom: 5px solid #505050;
}

.arrow-down {
    width: 0;
    height: 0;
    border-left: 5px solid transparent;
    border-right: 5px solid transparent;
    border-top: 5px solid #a3a3a3;
}

.scroll-thumb {
    flex: 1;
    margin: 0 1px 0 2px;
    background: #a8a8a8;
}

/* ===== Taskbar ===== */
.taskbar {
    height: 60px;
    flex: none;
    display: flex;
    align-items: center;
    box-sizing: border-box;
    border-top: 1px solid #4a483c;
    background: linear-gradient(90deg, #2a2416, #2a2618 30%, #25241e 60%, #2e2618 85%, #2a2418);
    color: #fff;
    font-size: 15px;
}

.weather {
    width: 314px;
    margin-left: 24px;
    display: flex;
    align-items: center;
}

.weather-icon {
    position: relative;
    width: 32px;
    height: 36px;
}

.weather-icon svg {
    width: 32px;
    height: 36px;
}

.weather-badge {
    position: absolute;
    left: 15px;
    top: 0;
    width: 19px;
    height: 19px;
    display: flex;
    align-items: center;
    justify-content: center;
    border-radius: 50%;
    background: #c42b1c;
    font-size: 13px;
}

.weather-text {
    margin-left: 8px;
    padding-bottom: 1px;
    line-height: 20px;
    font-size: 14.300px;
}

.weather-text .dim {
    color: #d0d0d0;
}

.start {
    width: 29px;
    height: 29px;
    margin-right: 18px;
}

.search {
    width: 272px;
    height: 38px;
    display: flex;
    align-items: center;
    box-sizing: border-box;
    padding-left: 14px;
    border-radius: 19px;
    background: #f3f3f1;
    color: #555;
    font-size: 16px;
    overflow: hidden;
}

.search-glass {
    width: 20px;
    height: 20px;
    margin-right: 11px;
}

.search-art {
    width: 60px;
    height: 38px;
    margin-left: auto;
    margin-right: 1px;
}

.apps {
    display: flex;
    margin-left: 4.500px;
}

.app {
    position: relative;
    width: 55px;
    height: 49px;
    display: flex;
    flex-direction: column;
    align-items: center;
    box-sizing: border-box;
    padding-top: 10px;
}

.app.current {
    width: 49px;
    margin-left: 2.500px;
    border-radius: 6px;
    background: rgba(255, 255, 255, 0.07);
    box-shadow: inset 0 0 0 1px rgba(255, 255, 255, 0.05);
}

.app svg {
    width: 29px;
    height: 29px;
}

.app-dot {
    width: 8px;
    height: 4px;
    margin-top: 4px;
    border-radius: 2px;
    background: #8c8c88;
}

.app-dot.wide {
    width: 20px;
    background: #4fc3f7;
}

.myhp-label {
    position: absolute;
    left: 0;
    right: 0;
    top: 15px;
    text-align: center;
    font-size: 12px;
    color: #dff2fb;
}

.help-mark {
    position: absolute;
    left: 0;
    right: 0;
    top: 12px;
    text-align: center;
    font-size: 18px;
    font-weight: 700;
    color: #fff;
}

.help-badge {
    position: absolute;
    left: 30px;
    top: 3px;
    width: 18px;
    height: 20px;
    border-radius: 50%;
    background: #ffc107;
}

.wa-badge {
    position: absolute;
    left: 26px;
    top: 1px;
    width: 25px;
    height: 22px;
    display: flex;
    align-items: center;
    justify-content: center;
    border-radius: 50%;
    background: #4fb8f0;
    color: #111;
    font-size: 12px;
}

.h-badge {
    position: absolute;
    left: 29px;
    top: 1px;
    width: 20px;
    height: 22px;
    display: flex;
    align-items: center;
    justify-content: center;
    border-radius: 50%;
    background: #0b4f96;
    color: #a8d0f5;
    font-size: 12px;
    font-weight: 700;
}

.tray {
    margin-left: auto;
    display: flex;
    align-items: center;
    padding-right: 26px;
}

.tray-chevron {
    width: 14px;
    height: 9px;
    margin-right: 23px;
}

.tray-cloud {
    width: 21px;
    height: 14px;
    margin-right: 19px;
}

.tray-sync {
    position: relative;
    width: 22px;
    height: 22px;
    margin-right: 18px;
}

.tray-sync svg {
    width: 20px;
    height: 20px;
}

.sync-dot {
    position: absolute;
    right: -1px;
    bottom: -1px;
    width: 11px;
    height: 11px;
    border-radius: 50%;
    background: #f7921e;
}

.tray-lang {
    width: 40px;
    text-align: center;
    line-height: 19px;
    margin-right: 15px;
    padding-bottom: 2px;
}

.tray-wifi {
    width: 21px;
    height: 15px;
    margin-right: 9px;
}

.tray-sound {
    width: 20px;
    height: 16px;
    margin-right: 11px;
}

.tray-battery {
    width: 20px;
    height: 13px;
}

.tray-clock {
    width: 99px;
    text-align: right;
    line-height: 20px;
    white-space: nowrap;
    padding-bottom: 2px;
}

.tray-bell {
    width: 16px;
    height: 20px;
    margin-left: 11px;
}
```
